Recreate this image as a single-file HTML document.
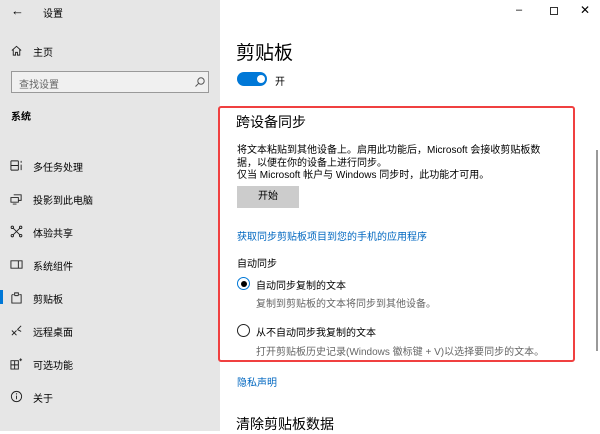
<!DOCTYPE html>
<html><head><meta charset="utf-8"><style>
*{margin:0;padding:0;box-sizing:border-box}
body{width:600px;height:431px;overflow:hidden;background:#fff;font-family:"Liberation Sans","Noto Sans CJK SC",sans-serif;color:#000;position:relative}
.side{position:absolute;left:0;top:0;width:220px;height:431px;background:#e6e6e6}
.a{position:absolute;white-space:nowrap}
.s{font-size:10px}
.item{position:absolute;left:33px;font-size:10px;white-space:nowrap}
.ic{position:absolute;left:10px;width:13px;height:13px}
</style></head><body>
<div class="side">
<div class="a" style="left:11px;top:3px;font-size:13px">←</div>
<div class="a s" style="left:43px;top:5px">设置</div>
<svg class="ic" style="top:44px" viewBox="0 0 14 14"><path d="M2 7 L7 2.5 L12 7 M3.5 6 V12 H6 V9 H8 V12 H10.5 V6" fill="none" stroke="#222" stroke-width="1"/></svg>
<div class="item" style="top:44px">主页</div>
<div class="a" style="left:11px;top:71px;width:198px;height:22px;border:1px solid #999;background:#f0f0f0"></div>
<div class="a s" style="left:19px;top:76px;color:#666">查找设置</div>
<svg class="a" style="left:194px;top:76px;width:12px;height:12px" viewBox="0 0 12 12"><circle cx="7" cy="5" r="3.2" fill="none" stroke="#555"/><path d="M4.7 7.3 L1.5 10.5" stroke="#555"/></svg>
<div class="a s" style="left:11px;top:108px;font-weight:bold">系统</div>
<svg class="ic" style="top:159px" viewBox="0 0 14 14"><path d="M1 2 H9 M1 12 H9 M1 2 V12 M9 2 V12 M1 7 H9 M12 2 V4 M12 6 V12" fill="none" stroke="#222"/></svg>
<div class="item" style="top:159px">多任务处理</div>
<svg class="ic" style="top:192px" viewBox="0 0 14 14"><path d="M4 3 H12 V9 H9 M1 6 H9 V11 H1 Z M3 13 H7" fill="none" stroke="#222"/></svg>
<div class="item" style="top:192px">投影到此电脑</div>
<svg class="ic" style="top:225px" viewBox="0 0 14 14"><path d="M3 3 L11 11 M11 3 L3 11" stroke="#222"/><circle cx="2.5" cy="2.5" r="1.3" fill="none" stroke="#222"/><circle cx="11.5" cy="2.5" r="1.3" fill="none" stroke="#222"/><circle cx="2.5" cy="11.5" r="1.3" fill="none" stroke="#222"/><circle cx="11.5" cy="11.5" r="1.3" fill="none" stroke="#222"/></svg>
<div class="item" style="top:225px">体验共享</div>
<svg class="ic" style="top:258px" viewBox="0 0 14 14"><path d="M1 3 H13 V11 H1 Z M9 3 V11" fill="none" stroke="#222"/></svg>
<div class="item" style="top:258px">系统组件</div>
<div class="a" style="left:0;top:290px;width:3px;height:14px;background:#0078d7"></div>
<svg class="ic" style="top:291px" viewBox="0 0 14 14"><path d="M2 4 H4 M10 4 H12 V13 H2 V4 M5 5 V2 H9 V5 M5 5 H9" fill="none" stroke="#222"/></svg>
<div class="item" style="top:291px">剪贴板</div>
<svg class="ic" style="top:324px" viewBox="0 0 14 14"><path d="M2 12 L7 7 M2 7 L7 12 M8 6 L12 2 M8 6 L12 8" fill="none" stroke="#222"/></svg>
<div class="item" style="top:324px">远程桌面</div>
<svg class="ic" style="top:357px" viewBox="0 0 14 14"><path d="M1 4 H9 V13 H1 Z M1 8.5 H9 M5 4 V13 M10 3 H13 M11.5 1.5 V4.5" fill="none" stroke="#222"/></svg>
<div class="item" style="top:357px">可选功能</div>
<svg class="ic" style="top:390px" viewBox="0 0 14 14"><circle cx="7" cy="7" r="5.5" fill="none" stroke="#222"/><path d="M7 6 V10" stroke="#222"/><circle cx="7" cy="4.2" r=".7" fill="#222"/></svg>
<div class="item" style="top:390px">关于</div>
</div>
<div class="a" style="left:516px;top:4px;font-size:11px">–</div>
<div class="a" style="left:550px;top:7px;width:8px;height:8px;border:1px solid #333"></div>
<div class="a" style="left:580px;top:3px;font-size:12px">✕</div>
<div class="a" style="left:236px;top:38px;font-size:19px">剪贴板</div>
<div class="a" style="left:237px;top:72px;width:30px;height:14px;border-radius:7px;background:#0078d7"></div>
<div class="a" style="left:257px;top:75px;width:8px;height:8px;border-radius:4px;background:#fff"></div>
<div class="a s" style="left:275px;top:73px">开</div>
<div class="a" style="left:218px;top:106px;width:357px;height:256px;border:2px solid #f04040;border-radius:3px"></div>
<div class="a" style="left:236px;top:112px;font-size:14px">跨设备同步</div>
<div class="a s" style="left:237px;top:145px;line-height:12.5px">将文本粘贴到其他设备上。启用此功能后，Microsoft 会接收剪贴板数<br>据，以便在你的设备上进行同步。<br>仅当 Microsoft 帐户与 Windows 同步时，此功能才可用。</div>
<div class="a s" style="left:237px;top:186px;width:62px;height:22px;background:#ccc;text-align:center;line-height:22px">开始</div>
<div class="a s" style="left:237px;top:228px;color:#0067c0">获取同步剪贴板项目到您的手机的应用程序</div>
<div class="a s" style="left:237px;top:255px">自动同步</div>
<div class="a" style="left:237px;top:277px;width:13px;height:13px;border-radius:50%;border:1.5px solid #0078d7"></div>
<div class="a" style="left:240.5px;top:280.5px;width:6px;height:6px;border-radius:50%;background:#000"></div>
<div class="a s" style="left:256px;top:277px">自动同步复制的文本</div>
<div class="a s" style="left:256px;top:295px;color:#666">复制到剪贴板的文本将同步到其他设备。</div>
<div class="a" style="left:237px;top:324px;width:13px;height:13px;border-radius:50%;border:1.5px solid #222"></div>
<div class="a s" style="left:256px;top:324px">从不自动同步我复制的文本</div>
<div class="a s" style="left:256px;top:343px;color:#666">打开剪贴板历史记录(Windows 徽标键 + V)以选择要同步的文本。</div>
<div class="a s" style="left:237px;top:374px;color:#0067c0">隐私声明</div>
<div class="a" style="left:236px;top:414px;font-size:14px">清除剪贴板数据</div>
<div class="a" style="left:596px;top:150px;width:2px;height:201px;background:#999"></div>
</body></html>
